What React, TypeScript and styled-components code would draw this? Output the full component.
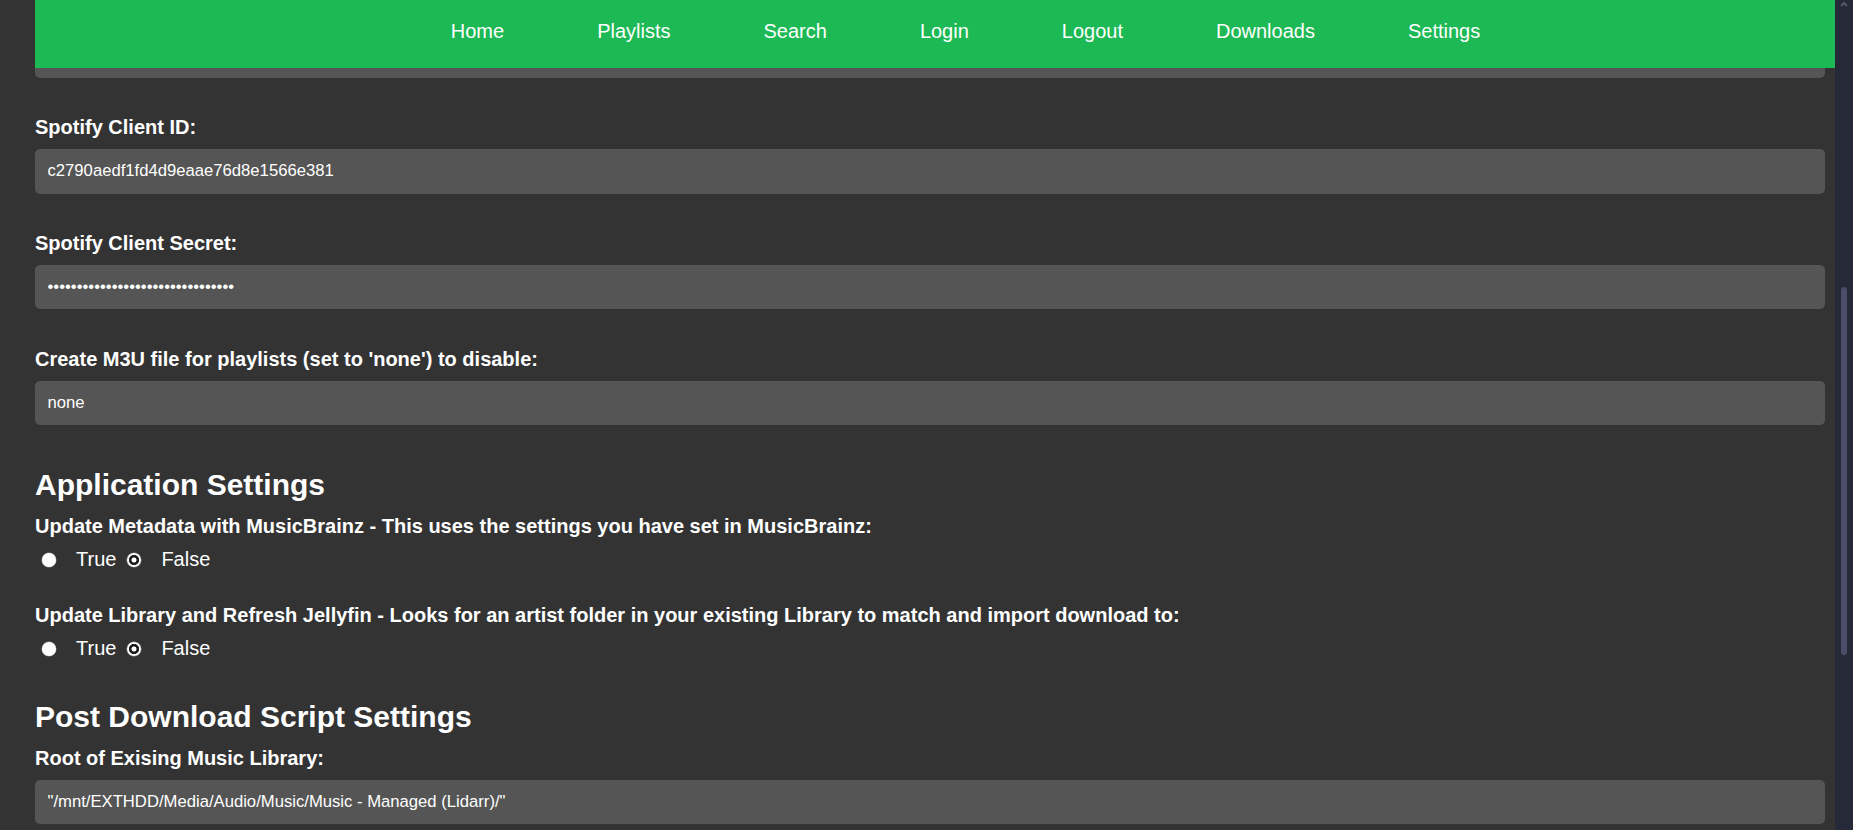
import styled, { createGlobalStyle } from "styled-components";

const GlobalStyle = createGlobalStyle`
  html, body {
    margin: 0;
    padding: 0;
    background: #333333;
    font-family: "Liberation Sans", Arial, sans-serif;
    overflow: hidden;
  }
`;

const Window = styled.div`
  display: flex;
  height: 100vh;
  background: #333333;
  color: #ffffff;
`;

const Page = styled.div`
  flex: 1;
  min-width: 0;
  overflow: hidden;
`;

const Nav = styled.nav`
  position: fixed;
  top: 0;
  left: 35px;
  right: 18px;
  z-index: 2;
  height: 68px;
  box-sizing: border-box;
  padding: 20px 0 0 61px;
  background: #1db954;
  display: flex;
  justify-content: center;
  align-items: flex-start;
  gap: 93px;
`;

const NavLink = styled.a`
  color: #ffffff;
  font-size: 20px;
  line-height: 23px;
  text-decoration: none;
  cursor: pointer;
`;

const Form = styled.form`
  display: flex;
  flex-direction: column;
  padding: 33.7px 10px 0 35px;
`;

const Heading = styled.h2`
  margin: 0 0 12.5px 0;
  font-size: 30px;
  line-height: 34.5px;
  font-weight: bold;
  color: #ffffff;
`;

const Group = styled.div<{ $gap: number }>`
  display: flex;
  flex-direction: column;
  margin-bottom: ${(p) => p.$gap}px;
`;

const Label = styled.label`
  display: block;
  font-size: 20px;
  line-height: 23px;
  font-weight: bold;
  color: #ffffff;
  margin-bottom: 10px;
`;

const TextInput = styled.input`
  width: 100%;
  box-sizing: border-box;
  height: 44.2px;
  padding: 0 12.5px;
  border: none;
  border-radius: 5px;
  background: #555555;
  color: #ffffff;
  font-family: "Liberation Sans", Arial, sans-serif;
  font-size: 16.67px;
  outline: none;
`;

const Options = styled.div`
  display: flex;
  align-items: center;
  gap: 4px;
  height: 23px;
`;

const Option = styled.label`
  display: flex;
  align-items: center;
  font-size: 20px;
  line-height: 23px;
  color: #ffffff;
`;

const Radio = styled.input`
  appearance: none;
  width: 14px;
  height: 14px;
  margin: 0 20px 0 7px;
  border-radius: 50%;
  background: #ffffff;
  box-shadow: 0 0 0 0.5px #9a9a9a;
  &:checked {
    background: radial-gradient(
      circle,
      #ffffff 0 2.2px,
      #1f1f1f 2.8px 4.8px,
      #ffffff 5.4px
    );
  }
`;

const ScrollBar = styled.div`
  width: 18px;
  flex-shrink: 0;
  background: #262a38;
  display: flex;
  flex-direction: column;
  align-items: center;
`;

const ScrollArrow = styled.svg`
  display: block;
  margin-top: 1px;
`;

const ScrollThumb = styled.div`
  margin-top: 280px;
  width: 6px;
  height: 368px;
  border-radius: 3px;
  background: #4a4e69;
`;

type TextField = { label: string; value: string; password?: boolean };

const spotify: TextField[] = [
  { label: "Spotify Client ID:", value: "c2790aedf1fd4d9eaae76d8e1566e381" },
  { label: "Spotify Client Secret:", value: "0123456789abcdef0123456789abcdef", password: true },
  { label: "Create M3U file for playlists (set to 'none') to disable:", value: "none" },
];

const Field = ({ field, gap }: { field: TextField; gap: number }) => (
  <Group $gap={gap}>
    <Label>{field.label}</Label>
    <TextInput
      type={field.password ? "password" : "text"}
      defaultValue={field.value}
      readOnly
    />
  </Group>
);

const Choice = ({ name, label, gap }: { name: string; label: string; gap: number }) => (
  <Group $gap={gap}>
    <Label>{label}</Label>
    <Options>
      <Option>
        <Radio type="radio" name={name} value="true" />
        True
      </Option>
      <Option>
        <Radio type="radio" name={name} value="false" defaultChecked />
        False
      </Option>
    </Options>
  </Group>
);

export default function App() {
  return (
    <>
      <GlobalStyle />
      <Window>
        <Page>
          <Nav>
            <NavLink>Home</NavLink>
            <NavLink>Playlists</NavLink>
            <NavLink>Search</NavLink>
            <NavLink>Login</NavLink>
            <NavLink>Logout</NavLink>
            <NavLink>Downloads</NavLink>
            <NavLink>Settings</NavLink>
          </Nav>
          <Form onSubmit={(e) => e.preventDefault()}>
            {/* tail of the previous field, scrolled up under the nav */}
            <Group $gap={38.5}>
              <TextInput type="text" readOnly />
            </Group>
            {spotify.map((f, i) => (
              <Field key={f.label} field={f} gap={i === spotify.length - 1 ? 43.5 : 38.5} />
            ))}
            <Heading>Application Settings</Heading>
            <Choice
              name="musicbrainz"
              label="Update Metadata with MusicBrainz - This uses the settings you have set in MusicBrainz:"
              gap={32.6}
            />
            <Choice
              name="jellyfin"
              label="Update Library and Refresh Jellyfin - Looks for an artist folder in your existing Library to match and import download to:"
              gap={40}
            />
            <Heading>Post Download Script Settings</Heading>
            <Field
              field={{
                label: "Root of Exising Music Library:",
                value: '"/mnt/EXTHDD/Media/Audio/Music/Music - Managed (Lidarr)/"',
              }}
              gap={0}
            />
          </Form>
        </Page>
        <ScrollBar>
          <ScrollArrow width="8" height="6" viewBox="0 0 8 6">
            <path d="M1 5 L4 2 L7 5" fill="none" stroke="#5e6379" strokeWidth="1.6" />
          </ScrollArrow>
          <ScrollThumb />
        </ScrollBar>
      </Window>
    </>
  );
}
